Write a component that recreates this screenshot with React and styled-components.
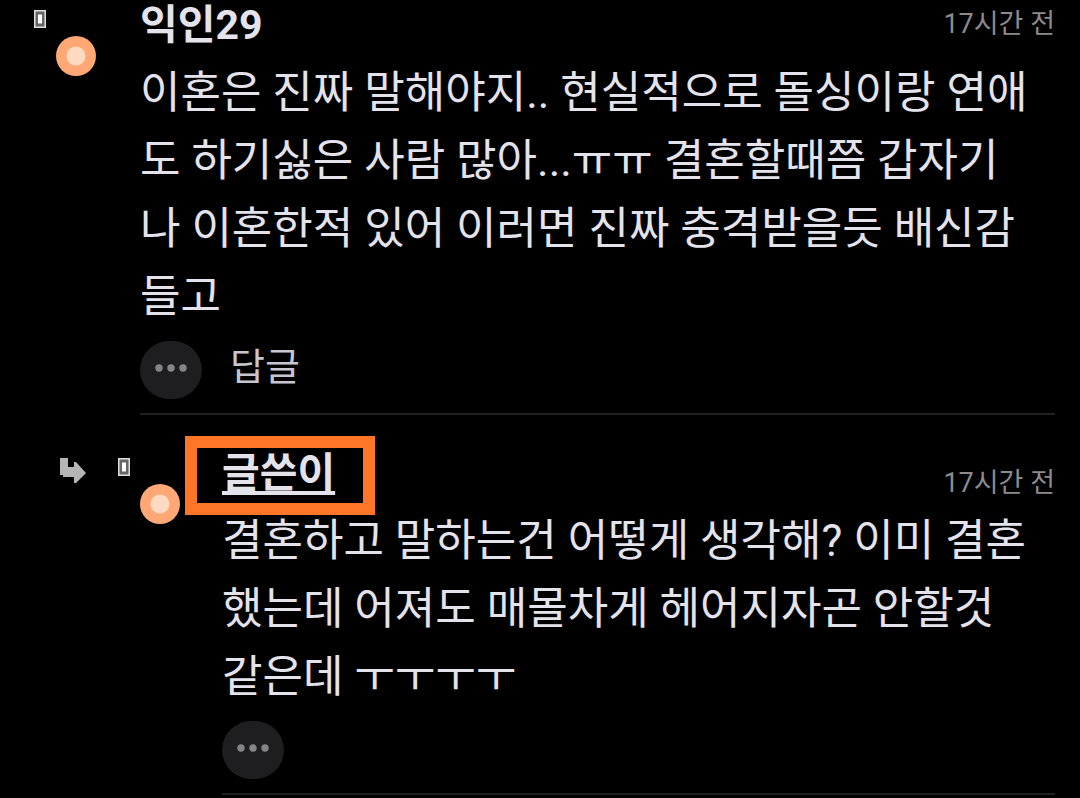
import React from "react";
import styled, { createGlobalStyle } from "styled-components";

const GlobalStyle = createGlobalStyle`
  body {
    margin: 0;
    background: #000;
    color: #e4e3ec;
    font-family: Roboto, "Noto Sans CJK KR", sans-serif;
  }
`;

const StyledThread = styled.main`
  padding-right: 25px;
`;

const StyledComment = styled.article`
  display: flex;
  padding-top: ${(props) => (props.$reply ? "33px" : "0")};
`;

const StyledGutter = styled.div`
  display: flex;
  flex: none;
  align-items: flex-start;
  box-sizing: border-box;
  width: ${(props) => (props.$reply ? "222px" : "140px")};
  padding-left: ${(props) => (props.$reply ? "60px" : "34px")};
  padding-top: 10px;
`;

const StyledArrow = styled.svg`
  width: 26px;
  height: 26px;
  margin-right: 32px;
`;

const StyledMarker = styled.svg`
  width: 12px;
  height: 18px;
  margin-right: 10px;
`;

const StyledAvatar = styled.svg`
  width: 40px;
  height: 40px;
  margin-top: 26px;
`;

const StyledContent = styled.div`
  flex: 1;
  min-width: 0;
  border-bottom: 2px solid #212123;
`;

const StyledHeader = styled.header`
  display: flex;
  align-items: ${(props) => (props.$reply ? "flex-end" : "flex-start")};
  justify-content: space-between;
  height: 59px;
`;

const StyledName = styled.strong`
  position: relative;
  align-self: flex-start;
  font-size: 41px;
  line-height: 50px;
  font-weight: 700;
`;

const StyledAuthorLink = styled.a`
  color: inherit;
  text-decoration: underline;
  text-decoration-thickness: 4px;
  text-underline-offset: 4px;
  text-decoration-skip-ink: none;
`;

const StyledHighlight = styled.span`
  position: absolute;
  top: -12px;
  right: -40px;
  bottom: -17px;
  left: -37px;
  border: 12px solid #ff7629;
  pointer-events: none;
`;

const StyledTime = styled.time`
  color: #8b8b8e;
  font-size: 27px;
  line-height: 48px;
`;

const StyledBody = styled.p`
  margin: 0;
  font-size: 44px;
  line-height: 68px;
  white-space: pre-line;
`;

const StyledActions = styled.div`
  display: flex;
  align-items: center;
  gap: 28px;
  padding: 10px 0 14px;
`;

const StyledMore = styled.button`
  display: flex;
  align-items: center;
  justify-content: center;
  width: 62px;
  height: 58px;
  padding: 0 0 4px;
  border: 0;
  border-radius: 29px;
  background: #1e1e20;
  cursor: pointer;
`;

const StyledReplyButton = styled.button`
  padding: 0 0 6px;
  border: 0;
  background: transparent;
  color: #c6c5d0;
  font-family: inherit;
  font-size: 38px;
  line-height: 52px;
  cursor: pointer;
`;

const comments = [
  {
    id: 1,
    name: "익인29",
    time: "17시간 전",
    text: "이혼은 진짜 말해야지.. 현실적으로 돌싱이랑 연애\n도 하기싫은 사람 많아...ㅠㅠ 결혼할때쯤 갑자기\n나 이혼한적 있어 이러면 진짜 충격받을듯 배신감\n들고",
    canReply: true,
  },
  {
    id: 2,
    name: "글쓴이",
    time: "17시간 전",
    text: "결혼하고 말하는건 어떻게 생각해? 이미 결혼\n했는데 어져도 매몰차게 헤어지자곤 안할것\n같은데 ㅜㅜㅜㅜ",
    reply: true,
  },
];

const ReplyArrow = () => (
  <StyledArrow viewBox="0 0 26 26" aria-hidden="true">
    <path d="M0 0h8v9h6V4h2l10 11-10 10h-2v-6H3v-2H0z" fill="#b5b5b5" />
  </StyledArrow>
);

const Marker = () => (
  <StyledMarker viewBox="0 0 12 18" aria-hidden="true">
    <path d="M0 0h12v18H0z" fill="#dedede" />
    <path d="M1.5 1.5h9v15h-9z" fill="#666" />
    <path d="M4 4.500h4v9H4z" fill="#fff" />
  </StyledMarker>
);

const Avatar = () => (
  <StyledAvatar viewBox="0 0 40 40" aria-hidden="true">
    <circle cx="20" cy="20" r="20" fill="#ffa876" />
    <circle cx="20" cy="20" r="9.5" fill="#ffdac3" />
  </StyledAvatar>
);

const Comment = ({ name, time, text, reply, canReply }) => {
  return (
    <StyledComment $reply={reply}>
      <StyledGutter $reply={reply}>
        {reply && <ReplyArrow />}
        <Marker />
        <Avatar />
      </StyledGutter>
      <StyledContent>
        <StyledHeader $reply={reply}>
          <StyledName>
            {reply ? (
              <>
                <StyledAuthorLink href="#author">{name}</StyledAuthorLink>
                <StyledHighlight />
              </>
            ) : (
              name
            )}
          </StyledName>
          <StyledTime>{time}</StyledTime>
        </StyledHeader>
        <StyledBody>{text}</StyledBody>
        <StyledActions>
          <StyledMore type="button" aria-label="더보기">
            <svg width="32" height="8" viewBox="0 0 32 8" aria-hidden="true">
              <circle cx="4" cy="4" r="3.700" fill="#858587" />
              <circle cx="16" cy="4" r="3.700" fill="#858587" />
              <circle cx="28" cy="4" r="3.700" fill="#858587" />
            </svg>
          </StyledMore>
          {canReply && <StyledReplyButton type="button">답글</StyledReplyButton>}
        </StyledActions>
      </StyledContent>
    </StyledComment>
  );
};

const App = () => {
  return (
    <>
      <GlobalStyle />
      <StyledThread lang="ko">
        {comments.map((comment) => (
          <Comment key={comment.id} {...comment} />
        ))}
      </StyledThread>
    </>
  );
};

export default App;
